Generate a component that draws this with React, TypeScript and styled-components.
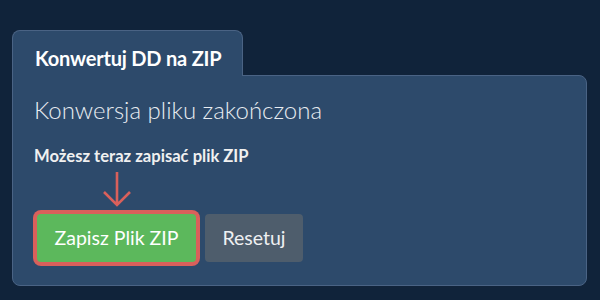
import * as React from 'react'
import styled, { createGlobalStyle } from 'styled-components'

const GlobalStyle = createGlobalStyle`
  html, body {
    margin: 0;
    padding: 0;
    background: #10233a;
  }
  body {
    font-family: Lato, "Open Sans", sans-serif;
  }
`

const Page = styled.div`
  width: 600px;
  height: 300px;
  box-sizing: border-box;
  padding: 30px 13px 0 12px;
`

const Card = styled.section`
  display: flex;
  flex-direction: column;
`

const TabRow = styled.div`
  display: flex;
  position: relative;
  z-index: 1;
`

const Tab = styled.div`
  width: 231px;
  height: 46px;
  box-sizing: border-box;
  padding: 15px 0 0 22px;
  background: #2d4a6b;
  border: 1px solid #4a6384;
  border-bottom: none;
  border-radius: 8px 8px 0 0;
  margin-bottom: -1px;
  color: #ffffff;
  font-weight: 700;
  font-size: 20px;
  line-height: 24px;
  letter-spacing: -0.2px;
`

const Panel = styled.div`
  height: 211px;
  box-sizing: border-box;
  background: #2d4a6b;
  border: 1px solid #4a6384;
  border-radius: 0 8px 8px 8px;
  padding: 20px 21px 0 21px;
  display: flex;
  flex-direction: column;
`

const Heading = styled.h2`
  margin: 0;
  font-size: 24px;
  font-weight: 300;
  line-height: 1.2;
  color: #e8ecf1;
`

const Hint = styled.p`
  margin: 20px 0 0 0;
  font-size: 16.6px;
  font-weight: 700;
  line-height: 22px;
  color: #f0f0f0;
`

const Actions = styled.div`
  display: flex;
  align-items: flex-end;
  gap: 9px;
  margin-top: 4px;
`

const Highlighted = styled.div`
  display: flex;
  flex-direction: column;
  align-items: center;
  margin-left: 3px;
`

const Arrow = styled.svg`
  display: block;
  margin-bottom: 7px;
`

const Button = styled.button<{ $variant: 'success' | 'secondary'; $marked?: boolean }>`
  height: 48px;
  width: ${p => (p.$variant === 'success' ? '159px' : '98px')};
  box-sizing: border-box;
  padding: 0;
  border: none;
  border-radius: 4px;
  font-family: Lato, "Open Sans", sans-serif;
  font-size: 19.5px;
  font-weight: 400;
  background: ${p => (p.$variant === 'success' ? '#5cb85c' : '#4e5d6c')};
  color: ${p => (p.$variant === 'success' ? '#ffffff' : '#eef0f2')};
  box-shadow: ${p => (p.$marked ? '0 0 0 4px #d9605b' : 'none')};
  cursor: pointer;
`

export default function App() {
  return (
    <>
      <GlobalStyle />
      <Page>
        <Card>
          <TabRow>
            <Tab>Konwertuj DD na ZIP</Tab>
          </TabRow>
          <Panel>
            <Heading>Konwersja pliku zakończona</Heading>
            <Hint>Możesz teraz zapisać plik ZIP</Hint>
            <Actions>
              <Highlighted>
                <Arrow width="30" height="36" viewBox="0 0 30 36">
                  <path
                    d="M15 1 V34 M2 21 L15 34 L28 21"
                    fill="none"
                    stroke="#d9605b"
                    strokeWidth="2.6"
                  />
                </Arrow>
                <Button $variant="success" $marked>
                  Zapisz Plik ZIP
                </Button>
              </Highlighted>
              <Button $variant="secondary">Resetuj</Button>
            </Actions>
          </Panel>
        </Card>
      </Page>
    </>
  )
}
